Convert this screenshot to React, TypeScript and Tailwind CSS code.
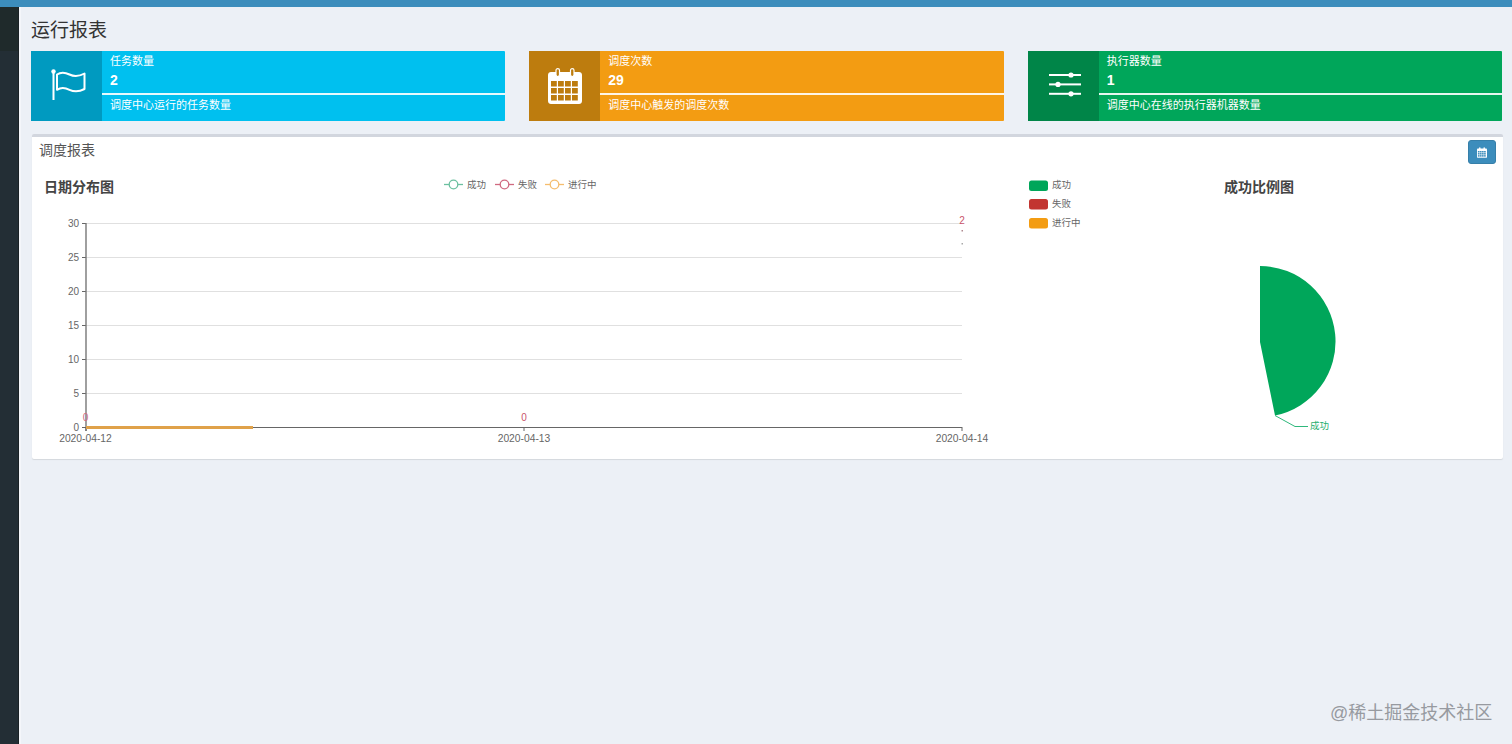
const cjk = "font-['Liberation_Sans','Noto_Sans_CJK_SC',sans-serif]";

function FlagIcon() {
  return (
    <svg className="mb-[4px] ml-[3px]" width="35" height="31" viewBox="0 0 35 31" fill="none">
      <circle cx="2.500" cy="2.500" r="2.200" fill="#fff" />
      <rect x="1.500" y="3" width="2" height="28" fill="#fff" />
      <path
        d="M6 5.500C10.500 2.500 14.500 3.500 18.500 5.500C23 7.800 28 7.600 33.500 4.500V20C28 23 23 23 18.500 20.800C14 18.600 10 18.200 6 20.800Z"
        stroke="#fff"
        strokeWidth="2"
        strokeLinejoin="round"
      />
    </svg>
  );
}

function CalendarIcon({ cell }: { cell: string }) {
  return (
    <svg width="34" height="36" viewBox="0 0 34 36" fill="none">
      <path
        d="M3 4H31C32.700 4 34 5.300 34 7V33C34 34.700 32.700 36 31 36H3C1.300 36 0 34.700 0 33V7C0 5.300 1.300 4 3 4Z"
        fill="#fff"
      />
      <rect x="8" y="0.600" width="3.500" height="8" rx="1.750" fill={cell} stroke="#fff" strokeWidth="1.200" />
      <rect x="22.500" y="0.600" width="3.500" height="8" rx="1.750" fill={cell} stroke="#fff" strokeWidth="1.200" />
      {[13, 20, 27].flatMap((y) =>
        [3, 10, 17, 24].map((x) => (
          <rect key={`${x}-${y}`} x={x} y={y} width="5.800" height="5.500" fill={cell} />
        )),
      )}
    </svg>
  );
}

function SlidersIcon() {
  return (
    <svg className="mb-[4px] ml-[3px]" width="32" height="26" viewBox="0 0 32 26" fill="#fff">
      <rect x="0" y="3" width="32" height="2" />
      <rect x="0" y="12.400" width="32" height="2" />
      <rect x="0" y="21.800" width="32" height="2" />
      <circle cx="22" cy="4" r="2.600" />
      <circle cx="9" cy="13.400" r="2.600" />
      <circle cx="22" cy="22.800" r="2.600" />
    </svg>
  );
}

type Stat = {
  title: string;
  value: string;
  desc: string;
  bg: string;
  iconBg: string;
  icon: React.ReactNode;
};

const stats: Stat[] = [
  { title: "任务数量", value: "2", desc: "调度中心运行的任务数量", bg: "bg-[#00c0ef]", iconBg: "bg-[#009ac0]", icon: <FlagIcon /> },
  { title: "调度次数", value: "29", desc: "调度中心触发的调度次数", bg: "bg-[#f39c12]", iconBg: "bg-[#bd7c0e]", icon: <CalendarIcon cell="#bd7c0e" /> },
  { title: "执行器数量", value: "1", desc: "调度中心在线的执行器机器数量", bg: "bg-[#00a65a]", iconBg: "bg-[#008548]", icon: <SlidersIcon /> },
];

function StatCard({ s }: { s: Stat }) {
  return (
    <div className={`flex h-[70px] rounded-[1px] text-white ${s.bg}`}>
      <div className={`flex w-[71px] shrink-0 items-center justify-center ${s.iconBg}`}>{s.icon}</div>
      <div className="flex-1">
        <div className="h-[42px] pl-[8px] pt-[3px]">
          <div className="text-[11px] leading-[15px]">{s.title}</div>
          <div className="text-[14px] font-bold leading-[22px]">{s.value}</div>
        </div>
        <div className="h-[2px] bg-white/90" />
        <div className="pl-[8px] pt-[3px] text-[11px] leading-[15px]">{s.desc}</div>
      </div>
    </div>
  );
}

const gridRows = [
  { label: "30", y: 223.500 },
  { label: "25", y: 257.500 },
  { label: "20", y: 291.500 },
  { label: "15", y: 325.500 },
  { label: "10", y: 359.500 },
  { label: "5", y: 393.500 },
  { label: "0", y: 427.500 },
];

function LegendMark({ x, color }: { x: number; color: string }) {
  return (
    <g stroke={color} fill="#fff">
      <line x1={x} y1="184.500" x2={x + 19} y2="184.500" strokeWidth="1.300" />
      <circle cx={x + 9.500} cy="184.500" r="4.300" strokeWidth="1.300" />
    </g>
  );
}

function LineChart() {
  return (
    <svg className="block" width="981" height="294" viewBox="32 165 981 294" fontFamily="'Liberation Sans','Noto Sans CJK SC',sans-serif">
      <text x="44" y="192" fontSize="14" fontWeight="700" fill="#444">日期分布图</text>
      <LegendMark x={444} color="#6cc0a0" />
      <text x="467" y="187.500" fontSize="9.500" fill="#666">成功</text>
      <LegendMark x={495} color="#d06a80" />
      <text x="518" y="187.500" fontSize="9.500" fill="#666">失败</text>
      <LegendMark x={545} color="#f5bd6e" />
      <text x="568" y="187.500" fontSize="9.500" fill="#666">进行中</text>

      {gridRows.map((r) => (
        <g key={r.label}>
          {r.label !== "0" && <line x1="86" y1={r.y} x2="962" y2={r.y} stroke="#e0e0e0" strokeWidth="1.200" />}
          <line x1="82" y1={r.y} x2="86" y2={r.y} stroke="#666" />
          <text x="79" y={r.y + 3.500} textAnchor="end" fontSize="10" fill="#666">{r.label}</text>
        </g>
      ))}
      <line x1="86" y1="223" x2="86" y2="431" stroke="#777" strokeWidth="1.400" />
      <line x1="82" y1="427.500" x2="962" y2="427.500" stroke="#666" />
      {[86, 524, 962].map((x) => (
        <line key={x} x1={x} y1="427" x2={x} y2="431" stroke="#666" />
      ))}
      <text x="85.500" y="441.500" textAnchor="middle" fontSize="10.300" fill="#666">2020-04-12</text>
      <text x="524" y="441.500" textAnchor="middle" fontSize="10.300" fill="#666">2020-04-13</text>
      <text x="962" y="441.500" textAnchor="middle" fontSize="10.300" fill="#666">2020-04-14</text>

      <line x1="86" y1="427.500" x2="253" y2="427.500" stroke="#e0a24a" strokeWidth="3" />
      <text x="85.500" y="421" textAnchor="middle" fontSize="10" fill="#d06a80">0</text>
      <text x="524" y="421" textAnchor="middle" fontSize="10" fill="#c9546b">0</text>
      <text x="962" y="224" textAnchor="middle" fontSize="10" fill="#c9546b">2</text>
      <rect x="961.500" y="230" width="1.500" height="1.500" fill="#b08a90" />
      <rect x="961.500" y="243" width="1.500" height="1.500" fill="#a9a9a9" />
    </svg>
  );
}

function PieChart() {
  return (
    <svg className="block" width="490" height="294" viewBox="1013 165 490 294" fontFamily="'Liberation Sans','Noto Sans CJK SC',sans-serif">
      <rect x="1029" y="180.500" width="19" height="10.500" rx="2.500" fill="#00a65a" />
      <text x="1052" y="188" fontSize="9.500" fill="#666">成功</text>
      <rect x="1029" y="199" width="19" height="10.500" rx="2.500" fill="#c23531" />
      <text x="1052" y="207" fontSize="9.500" fill="#666">失败</text>
      <rect x="1029" y="218" width="19" height="10.500" rx="2.500" fill="#f39c12" />
      <text x="1052" y="226" fontSize="9.500" fill="#666">进行中</text>
      <text x="1224" y="192" fontSize="14" fontWeight="700" fill="#444">成功比例图</text>
      <path d="M1260 266A75.500 75.500 0 0 1 1275 415.500L1260 342Z" fill="#00a65a" />
      <path d="M1275 415.500L1295 426.500H1308" fill="none" stroke="#2fb87c" />
      <text x="1310" y="429" fontSize="9.500" fill="#1fae6e">成功</text>
    </svg>
  );
}

export default function App() {
  return (
    <div className={`relative flex h-[744px] flex-col overflow-hidden bg-[#ecf0f6] ${cjk}`}>
      {/* Top bar */}
      <div className="h-[7px] shrink-0 bg-[#3c8dbc]" />

      <div className="flex min-h-0 flex-1">
        {/* Sidebar */}
        <div className="flex w-[19px] shrink-0 flex-col border-r border-[#1b2226] bg-[#232e35]">
          <div className="h-[44px] bg-[#1f2a2b]" />
        </div>

        <div className="min-w-0 flex-1 border-l-2 border-[#f4f6fa] pl-[10px] pr-[9px]">
          <h1 className="h-[44px] pt-[10px] text-[19px] leading-[27px] text-[#333]">运行报表</h1>

          <div className="mr-[1px] grid grid-cols-3 gap-x-[24px]">
            {stats.map((s) => (
              <StatCard key={s.title} s={s} />
            ))}
          </div>

          {/* Report panel */}
          <div className="ml-[1px] mt-[13px] h-[325px] rounded-[2px] border-t-[3px] border-[#d2d6de] bg-white shadow-[0_1px_1px_rgba(0,0,0,0.1)]">
            <div className="flex h-[28px] items-start justify-between pl-[7px] pr-[7px]">
              <span className="pt-[3px] text-[14px] leading-[20px] text-[#555]">调度报表</span>
              <button className="mt-[3px] flex h-[24px] w-[28px] items-center justify-center rounded-[3px] border border-[#367fa9] bg-[#3c8dbc]">
                <svg width="10" height="11" viewBox="0 0 34 36" fill="none">
                  <path d="M3 4H31C32.700 4 34 5.300 34 7V33C34 34.700 32.700 36 31 36H3C1.300 36 0 34.700 0 33V7C0 5.300 1.300 4 3 4Z" fill="#fff" />
                  <rect x="7" y="0" width="5" height="9" rx="2.500" fill="#fff" />
                  <rect x="22" y="0" width="5" height="9" rx="2.500" fill="#fff" />
                  {[13, 20, 27].flatMap((y) =>
                    [3, 10, 17, 24].map((x) => (
                      <rect key={`${x}-${y}`} x={x} y={y} width="5.800" height="5" fill="#3c8dbc" />
                    )),
                  )}
                </svg>
              </button>
            </div>
            <div className="flex">
              <LineChart />
              <PieChart />
            </div>
          </div>
        </div>
      </div>

      {/* Site watermark */}
      <div className="pointer-events-none absolute left-[1330px] top-[702px] text-[18px] leading-[22px] text-[#979aa0]">
        @稀土掘金技术社区
      </div>
    </div>
  );
}
